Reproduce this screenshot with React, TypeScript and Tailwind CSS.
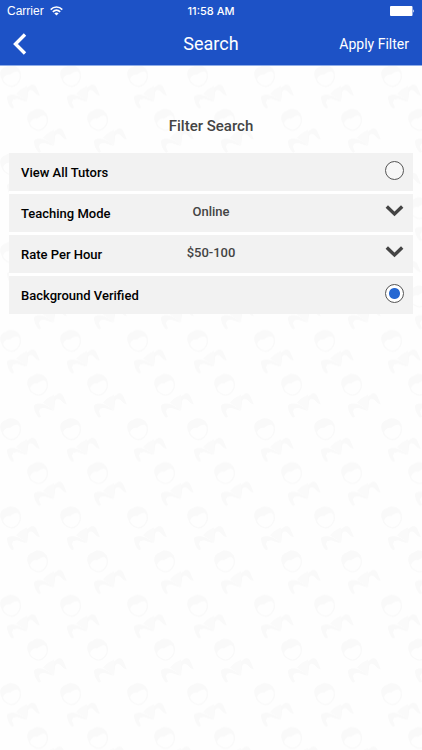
import { useState } from "react";

function TutorPattern() {
  return (
    <svg className="absolute inset-0 h-full w-full" aria-hidden="true">
      <defs>
        <g id="tutor">
          <path d="M2 15C2 20 5 22 7 23C10 25 14 25 17 22C20 19 21 16 20 12" fill="none" stroke="#f9f9f9" strokeWidth="1.3" />
          <path d="M1 16C-1 11 1 6 6 5C9 2 15 3 18 6C20 8 21 10 21 14L18 10C15 9 13 11 10 13C7 12 4 14 3 18Z" fill="#f9f9f9" />
          <path d="M16 32L20 28L27 24V40L22 36Z" fill="#fafafa" />
          <path d="M7 35C9 32 15 33 18 34L25 38L26 40L17 37L13 38L12 41L14 46L12 47C9 44 7 40 7 35Z" fill="#f9f9f9" />
          <path d="M27 26L31 23C34 22 36 24 37 27L40 34L37 33L33 29C30 27 28 29 28 32L27 40Z" fill="#f9f9f9" />
        </g>
        <pattern id="tutors" y="-4.2" width="127" height="88.3" patternUnits="userSpaceOnUse">
          <use href="#tutor" x="0" y="0" />
          <use href="#tutor" x="60" y="0" />
          <use href="#tutor" x="27" y="44" />
          <use href="#tutor" x="87" y="44" />
          <use href="#tutor" x="27" y="-44.3" />
          <use href="#tutor" x="87" y="-44.3" />
        </pattern>
      </defs>
      <rect width="100%" height="100%" fill="url(#tutors)" />
    </svg>
  );
}

function StatusBar() {
  return (
    <div className="grid h-[22px] grid-cols-3 items-center px-[7px] font-['Liberation_Sans',sans-serif] text-[12px]">
      <div className="flex items-center gap-[6px]">
        <span>Carrier</span>
        <svg width="13" height="10" viewBox="0 0 13 10" aria-hidden="true">
          <g fill="none" stroke="currentColor" strokeWidth="1.6">
            <path d="M0.7 3.6C4 0.2 9 0.2 12.3 3.6" />
            <path d="M2.8 5.9C5 3.8 8 3.8 10.2 5.9" />
          </g>
          <path d="M4.3 7.3C5.6 6.1 7.4 6.1 8.7 7.3L6.5 9.6Z" fill="currentColor" />
        </svg>
      </div>
      <span className="text-center font-['Inter',sans-serif] text-[11px] font-medium">11:58 AM</span>
      <svg className="justify-self-end" width="25" height="10" viewBox="0 0 25 10" aria-hidden="true">
        <rect width="22.5" height="10" rx="1" fill="currentColor" />
        <path d="M23.2 3.3Q25 5 23.2 6.7Z" fill="currentColor" />
      </svg>
    </div>
  );
}

type RadioRowProps = { id: string; label: string; checked: boolean; onSelect: () => void };

function RadioRow({ id, label, checked, onSelect }: RadioRowProps) {
  return (
    <div className="flex h-[38px] items-center justify-between bg-[#f2f2f2] pr-[9px] pl-3">
      <label htmlFor={id} className="pt-[2px] font-medium text-black">{label}</label>
      <input
        id={id}
        type="radio"
        name="tutors"
        checked={checked}
        onChange={onSelect}
        className="mb-1 h-[19px] w-[19px] appearance-none rounded-full border border-[#555] bg-[#f7f7f7] checked:bg-[radial-gradient(circle,#2567d2_5px,#fff_6px)]"
      />
    </div>
  );
}

type SelectRowProps = { id: string; label: string; options: string[]; initial: string };

function SelectRow({ id, label, options, initial }: SelectRowProps) {
  const [value, setValue] = useState(initial);
  return (
    <div className="grid h-[38px] grid-cols-2 items-center bg-[#f2f2f2]">
      <label htmlFor={id} className="col-start-1 row-start-1 pt-[2px] pl-3 font-medium text-black">{label}</label>
      <select
        id={id}
        value={value}
        onChange={(e) => setValue(e.target.value)}
        className="col-span-2 col-start-1 row-start-1 h-full appearance-none bg-transparent pb-[2px] text-center font-medium text-[#444] [text-align-last:center]"
      >
        {options.map((o) => (
          <option key={o}>{o}</option>
        ))}
      </select>
      <svg className="pointer-events-none col-start-2 row-start-1 mr-[9px] mb-1 justify-self-end" width="19" height="12" viewBox="0 0 19 12" fill="none" stroke="#444" strokeWidth="3.4" aria-hidden="true">
        <path d="M1.8 1.5L9.5 9L17.2 1.5" />
      </svg>
    </div>
  );
}

export default function App() {
  const [choice, setChoice] = useState("verified");
  return (
    <div className="flex min-h-screen flex-col bg-[#fefefe] font-['Roboto',sans-serif]">
      <header className="border-b border-[#8fade8] bg-[#1d52c6] text-white">
        <StatusBar />
        <nav className="grid h-[43px] grid-cols-[1fr_auto_1fr] items-center px-[13px]">
          <button aria-label="Back" className="justify-self-start">
            <svg width="15" height="22" viewBox="0 0 15 22" fill="none" stroke="currentColor" strokeWidth="3.4" aria-hidden="true">
              <path d="M12 1.5L2.5 11L12 20.5" />
            </svg>
          </button>
          <h1 className="text-[18px]">Search</h1>
          <button className="justify-self-end pt-[2px] text-[14px]">Apply Filter</button>
        </nav>
      </header>
      <main className="relative flex-1">
        <TutorPattern />
        <form className="relative px-[9px] pt-12 text-[13px]">
          <h2 className="text-center text-[15px] leading-6 font-medium text-[#444]">Filter Search</h2>
          <div className="mt-[15px] flex flex-col gap-[3px] bg-white">
            <RadioRow id="all" label="View All Tutors" checked={choice === "all"} onSelect={() => setChoice("all")} />
            <SelectRow id="mode" label="Teaching Mode" options={["Online", "In Person"]} initial="Online" />
            <SelectRow id="rate" label="Rate Per Hour" options={["$0-50", "$50-100", "$100-150"]} initial="$50-100" />
            <RadioRow id="verified" label="Background Verified" checked={choice === "verified"} onSelect={() => setChoice("verified")} />
          </div>
        </form>
      </main>
    </div>
  );
}
